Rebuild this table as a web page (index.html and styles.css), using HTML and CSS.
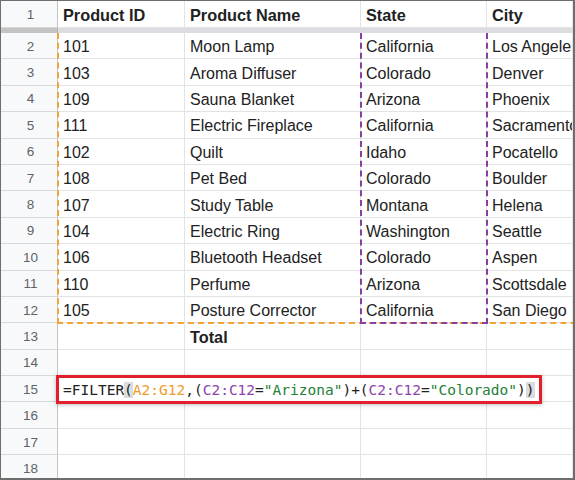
FILE: index.html
```html
<!DOCTYPE html>
<html>
<head>
<meta charset="utf-8">
<link rel="stylesheet" href="styles.css">
</head>
<body>
<div class="sheet">
  <div class="row head">
    <div class="rn">1</div><div class="c b">Product ID</div><div class="c b">Product Name</div><div class="c b">State</div><div class="c b">City</div>
  </div>
  <div class="freeze"><div class="fz-rn"></div><div class="fz-c"></div></div>
  <div class="row"><div class="rn">2</div><div class="c">101</div><div class="c">Moon Lamp</div><div class="c">California</div><div class="c">Los Angeles</div></div>
  <div class="row"><div class="rn">3</div><div class="c">103</div><div class="c">Aroma Diffuser</div><div class="c">Colorado</div><div class="c">Denver</div></div>
  <div class="row"><div class="rn">4</div><div class="c">109</div><div class="c">Sauna Blanket</div><div class="c">Arizona</div><div class="c">Phoenix</div></div>
  <div class="row"><div class="rn">5</div><div class="c">111</div><div class="c">Electric Fireplace</div><div class="c">California</div><div class="c">Sacramento</div></div>
  <div class="row"><div class="rn">6</div><div class="c">102</div><div class="c">Quilt</div><div class="c">Idaho</div><div class="c">Pocatello</div></div>
  <div class="row"><div class="rn">7</div><div class="c">108</div><div class="c">Pet Bed</div><div class="c">Colorado</div><div class="c">Boulder</div></div>
  <div class="row"><div class="rn">8</div><div class="c">107</div><div class="c">Study Table</div><div class="c">Montana</div><div class="c">Helena</div></div>
  <div class="row"><div class="rn">9</div><div class="c">104</div><div class="c">Electric Ring</div><div class="c">Washington</div><div class="c">Seattle</div></div>
  <div class="row"><div class="rn">10</div><div class="c">106</div><div class="c">Bluetooth Headset</div><div class="c">Colorado</div><div class="c">Aspen</div></div>
  <div class="row"><div class="rn">11</div><div class="c">110</div><div class="c">Perfume</div><div class="c">Arizona</div><div class="c">Scottsdale</div></div>
  <div class="row"><div class="rn">12</div><div class="c">105</div><div class="c">Posture Corrector</div><div class="c">California</div><div class="c">San Diego</div></div>
  <div class="row"><div class="rn">13</div><div class="c"></div><div class="c b">Total</div><div class="c"></div><div class="c"></div></div>
  <div class="row"><div class="rn">14</div><div class="c"></div><div class="c"></div><div class="c"></div><div class="c"></div></div>
  <div class="row"><div class="rn">15</div><div class="c"></div><div class="c"></div><div class="c"></div><div class="c"></div></div>
  <div class="row"><div class="rn">16</div><div class="c"></div><div class="c"></div><div class="c"></div><div class="c"></div></div>
  <div class="row"><div class="rn">17</div><div class="c"></div><div class="c"></div><div class="c"></div><div class="c"></div></div>
  <div class="row"><div class="rn">18</div><div class="c"></div><div class="c"></div><div class="c"></div><div class="c"></div></div>

  <div class="range-a"></div>
  <div class="range-c"></div>
  <div class="editor"><span class="t">=FILTER</span><span class="hl">(</span><span class="or">A2:G12</span><span class="t">,(</span><span class="pu">C2:C12</span><span class="t">=</span><span class="gr">"Arizona"</span><span class="t">)+(</span><span class="pu">C2:C12</span><span class="t">=</span><span class="gr">"Colorado"</span><span class="t">)</span><span class="hl">)</span></div>
</div>
</body>
</html>
```
FILE: styles.css
```css
* { box-sizing: border-box; }
html, body { margin: 0; padding: 0; background: #fff; }
.sheet {
  position: relative;
  width: 575px;
  height: 480px;
  overflow: hidden;
  border: 1px solid #6e6e6e;
  border-right-width: 2px;
  border-bottom-width: 2px;
  font-family: "Liberation Sans", Arial, sans-serif;
  color: #222;
}
.row {
  display: grid;
  grid-template-columns: 57px 127px 176px 126px 1fr;
  height: 26.4px;
}
.row.head { height: 27px; }
.rn {
  background: #f8f9fa;
  border-right: 1px solid #c4c4c4;
  border-bottom: 1px solid #d8d8d8;
  color: #5f6368;
  font-size: 13.5px;
  display: flex;
  align-items: center;
  justify-content: center;
  padding: 1px 0 0 3px;
}
.c {
  border-right: 1px solid #e2e3e3;
  border-bottom: 1px solid #e2e3e3;
  font-size: 16px;
  white-space: nowrap;
  overflow: hidden;
  display: flex;
  align-items: center;
  padding: 3px 0 0 5px;
}
.c.b { font-weight: bold; font-size: 16.3px; }
.freeze {
  display: grid;
  grid-template-columns: 57px 1fr;
  height: 5px;
}
.fz-rn { background: #c3c3c3; border-right: 1px solid #b5b5b5; }
.fz-c { background: #dcdde0; }

.range-a {
  position: absolute;
  left: 56px;
  top: 32px;
  width: 600px;
  height: 291px;
  border-left: 2px dashed #f0a43a;
  border-bottom: 2px dashed #f0a43a;
}
.range-c {
  position: absolute;
  left: 359px;
  top: 32px;
  width: 128px;
  height: 291px;
  border-left: 2px dashed #8a3f9c;
  border-right: 2px dashed #8a3f9c;
  border-bottom: 2px dashed #8a3f9c;
}
.editor {
  position: absolute;
  left: 55px;
  top: 374px;
  width: 486px;
  height: 29px;
  background: #fff;
  border: 3px solid #e0202c;
  box-shadow: 0 1px 4px rgba(0,0,0,0.25);
  font-family: "DejaVu Sans Mono", "Liberation Mono", monospace;
  font-size: 14.5px;
  line-height: 24px;
  padding-left: 4px;
  white-space: nowrap;
}
.t { color: #222; }
.hl { color: #222; background: #dadce0; }
.or { color: #f09b2c; }
.pu { color: #8e44ad; }
.gr { color: #23803a; }
```
